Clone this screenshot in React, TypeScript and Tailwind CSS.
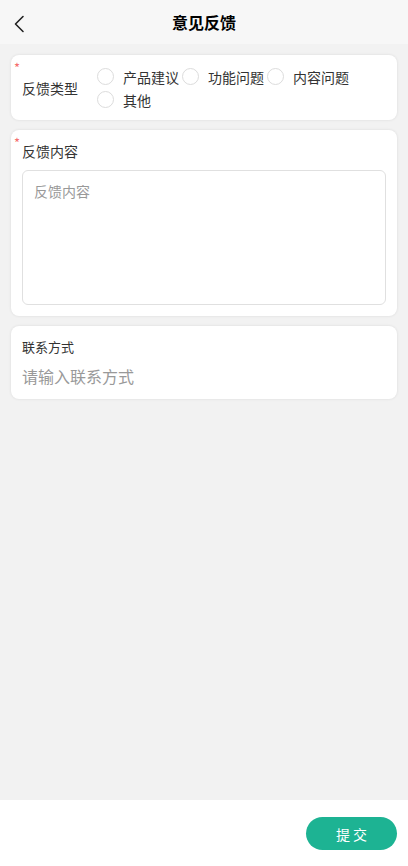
import { useState } from 'react';

const types = ['产品建议', '功能问题', '内容问题', '其他'];

const font = { fontFamily: '"Noto Sans CJK SC", "Noto Sans", sans-serif' };

export default function App() {
  const [type, setType] = useState<string | null>(null);
  const [content, setContent] = useState('');
  const [contact, setContact] = useState('');

  return (
    <div className="flex min-h-[866px] flex-col bg-[#f2f2f2] text-[#333]" style={font}>
      <header className="relative flex h-11 items-center justify-center bg-[#f7f7f7]">
        <button className="absolute left-[11px] top-[13px] p-0.5">
          <svg width="14" height="18" viewBox="0 0 14 18" fill="none">
            <path d="M10 1.5 L2.5 9 L10 16.5" stroke="#222" strokeWidth="1.6" strokeLinecap="round" strokeLinejoin="round" />
          </svg>
        </button>
        <h1 className="text-base font-bold text-black">意见反馈</h1>
      </header>

      <main className="flex flex-1 flex-col gap-[10px] px-[11px] pt-[11px]">
        <section className="relative flex items-center rounded-lg bg-white pb-[9px] pl-[11px] pr-2 pt-[10px] shadow-[0_0_3px_rgba(0,0,0,0.1)]">
          <span className="absolute left-[3px] top-[6px] text-[13px] leading-none text-[#f56c6c]">*</span>
          <div className="w-[75px] shrink-0 text-sm">反馈类型</div>
          <div className="flex flex-wrap">
            {types.map((t) => (
              <label key={t} className="flex h-[23px] cursor-pointer items-center pr-[3px]" onClick={() => setType(t)}>
                <span
                  className={`h-[17px] w-[17px] rounded-full border ${type === t ? 'border-[5px] border-[#1db393]' : 'border-[#dcdcdc]'}`}
                />
                <span className="ml-[9px] text-sm leading-none">{t}</span>
              </label>
            ))}
          </div>
        </section>

        <section className="relative rounded-lg bg-white px-[11px] pb-[11px] pt-[11px] shadow-[0_0_3px_rgba(0,0,0,0.1)]">
          <span className="absolute left-[3px] top-[6px] text-[13px] leading-none text-[#f56c6c]">*</span>
          <div className="text-sm leading-5">反馈内容</div>
          <textarea
            value={content}
            onChange={(e) => setContent(e.target.value)}
            placeholder="反馈内容"
            className="mt-[9px] block h-[135px] w-full resize-none rounded-md border border-[#e0e0e0] px-[11px] py-[10px] text-sm outline-none placeholder:text-[#999]"
          />
        </section>

        <section className="rounded-lg bg-white px-[11px] pb-[11px] pt-[11px] shadow-[0_0_3px_rgba(0,0,0,0.1)]">
          <div className="text-[13px] leading-[19px]">联系方式</div>
          <input
            value={contact}
            onChange={(e) => setContact(e.target.value)}
            placeholder="请输入联系方式"
            className="mt-2 block h-6 w-full text-base outline-none placeholder:text-[#999]"
          />
        </section>
      </main>

      <footer className="mt-auto flex h-[66px] items-start justify-end bg-white pr-[11px] pt-[17px]">
        <button className="h-[33px] w-[91px] rounded-full bg-[#1db393] text-sm text-white">提 交</button>
      </footer>
    </div>
  );
}
